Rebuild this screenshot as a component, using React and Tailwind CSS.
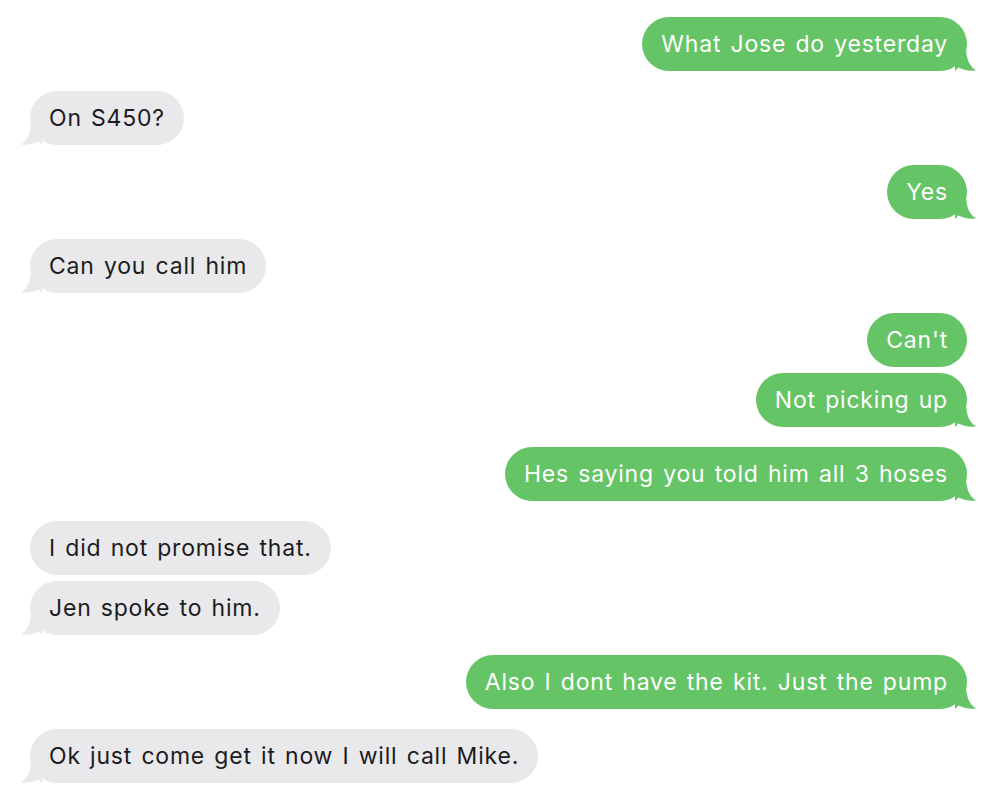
import React from 'react';

// groups of consecutive messages from the same side
const groups = [
  { me: true, msgs: ['What Jose do yesterday'] },
  { me: false, msgs: ['On S450?'] },
  { me: true, msgs: ['Yes'] },
  { me: false, msgs: ['Can you call him'] },
  { me: true, msgs: ["Can't", 'Not picking up'] },
  { me: true, msgs: ['Hes saying you told him all 3 hoses'] },
  { me: false, msgs: ['I did not promise that.', 'Jen spoke to him.'] },
  { me: true, msgs: ['Also I dont have the kit. Just the pump'] },
  { me: false, msgs: ['Ok just come get it now I will call Mike.'] },
];

function Tail({ me }) {
  if (me) {
    return (
      <svg className="absolute -right-[10px] bottom-0" width="22" height="24" viewBox="0 0 22 24">
        <path d="M0 0 H11 C11 11 14 19 21 23.5 C14 24.2 8 23 3.5 20.5 C2.5 21.8 1.2 23 0 24 Z" fill="#65c466" />
      </svg>
    );
  }
  return (
    <svg className="absolute -left-[10px] bottom-0" width="22" height="24" viewBox="0 0 22 24">
      <path d="M22 0 H11 C11 11 8 19 1 23.5 C8 24.2 14 23 18.5 20.5 C19.5 21.8 20.8 23 22 24 Z" fill="#e9e9eb" />
    </svg>
  );
}

function Bubble({ text, me, tail }) {
  return (
    <div className={me ? 'flex justify-end' : 'flex justify-start'}>
      <div
        className={
          me
            ? 'relative h-[54px] flex items-center px-[19px] rounded-[27px] bg-[#65c466] text-white'
            : 'relative h-[54px] flex items-center px-[19px] rounded-[27px] bg-[#e9e9eb] text-[#1c1c1e]'
        }
      >
        {tail && <Tail me={me} />}
        <span className="relative whitespace-nowrap tracking-[0.8px] [word-spacing:2px]">{text}</span>
      </div>
    </div>
  );
}

export default function App() {
  return (
    <div
      className="w-[998px] h-[800px] bg-white pt-[17px] pl-[30px] pr-[31px] flex flex-col gap-[20px] text-[23px] overflow-hidden"
      style={{ fontFamily: 'Inter, "Liberation Sans", sans-serif' }}
    >
      {groups.map((g, i) => (
        <div key={i} className="flex flex-col gap-[6px]">
          {g.msgs.map((m, j) => (
            <Bubble key={j} text={m} me={g.me} tail={j === g.msgs.length - 1} />
          ))}
        </div>
      ))}
    </div>
  );
}
